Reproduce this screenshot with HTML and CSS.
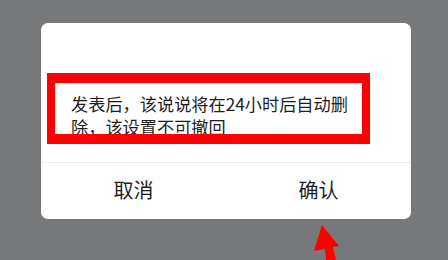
FILE: index.html
```html
<!DOCTYPE html>
<html lang="zh-CN">
<head>
    <meta charset="UTF-8">
    <meta name="viewport" content="width=device-width, initial-scale=1.0">
    <title>删除说说</title>
    <link rel="stylesheet" href="styles.css">
</head>
<body>
    <!-- Confirm Dialog -->
    <div class="dialog">
        <div class="dialog-body">
            <p class="message">发表后，该说说将在24小时后自动删除，该设置不可撤回</p>
            <!-- annotation box -->
            <div class="highlight"></div>
        </div>
        <div class="dialog-actions">
            <button class="action">取消</button>
            <button class="action">确认</button>
        </div>
    </div>

    <!-- annotation arrow -->
    <svg class="arrow" width="448" height="260" viewBox="0 0 448 260">
        <polygon points="322,225 314,251 325,249 326,260 336,260 333,247 339,246" fill="#ff0000"/>
    </svg>
</body>
</html>
```

FILE: styles.css
```css
/* General Styles */
body {
    margin: 0;
    padding: 0;
    width: 448px;
    height: 260px;
    overflow: hidden;
    background-color: #77787a;
    font-family: "Noto Sans CJK SC", "Noto Sans", sans-serif;
    position: relative;
}

/* Dialog */
.dialog {
    margin: 23px 0 0 41px;
    width: 370px;
    height: 196px;
    background-color: #fff;
    border-radius: 7px;
    display: flex;
    flex-direction: column;
    overflow: hidden;
}

.dialog-body {
    position: relative;
    height: 139px;
    border-bottom: 1px solid #ededed;
}

.message {
    margin: 0;
    padding: 69px 30px 0 30px;
    font-size: 17.2px;
    line-height: 23px;
    color: #1e1e1e;
}

/* Red annotation box */
.highlight {
    position: absolute;
    left: 6px;
    top: 50px;
    width: 323px;
    height: 71px;
    box-sizing: border-box;
    border-style: solid;
    border-color: #ff0000;
    border-width: 10px 8px 10px 8px;
}

.dialog-actions {
    flex: 1;
    display: flex;
}

.action {
    flex: 1;
    border: none;
    background: none;
    padding: 0 0 4px 0;
    font-family: inherit;
    font-size: 20px;
    color: #1e1e1e;
}

/* Red annotation arrow */
.arrow {
    position: absolute;
    left: 0;
    top: 0;
    pointer-events: none;
}
```
